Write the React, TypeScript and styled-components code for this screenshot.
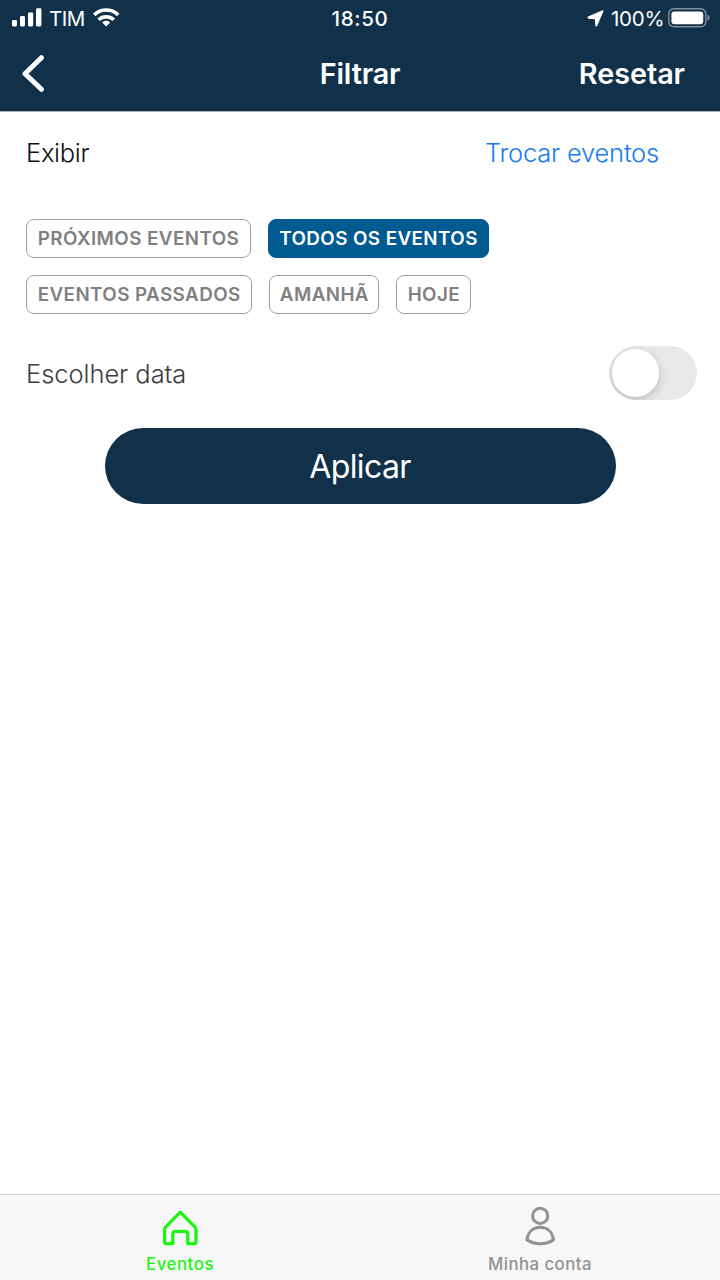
import React, { useState } from "react";
import styled, { createGlobalStyle } from "styled-components";

const GlobalStyle = createGlobalStyle`
  * { box-sizing: border-box; }
  body {
    margin: 0;
    background: #ffffff;
    font-family: Inter, "Liberation Sans", sans-serif;
  }
  button { font: inherit; border: 0; padding: 0; margin: 0; background: none; color: inherit; }
`;

const Screen = styled.div`
  display: flex;
  flex-direction: column;
  width: 720px;
  height: 1280px;
  overflow: hidden;
  background: #ffffff;
`;

const Header = styled.header`
  height: 111px;
  flex: none;
  background: #11314b;
  color: #ffffff;
  box-shadow: 0 1px 0 #a3b0ba;
`;

const StatusBar = styled.div`
  display: grid;
  grid-template-columns: 1fr auto 1fr;
  align-items: center;
  height: 36px;
  padding: 0 10px 0 12px;
  font-size: 20.5px;
  line-height: 35px;
`;

const StatusGroup = styled.div<{ $end?: boolean }>`
  display: flex;
  align-items: center;
  height: 36px;
  justify-content: ${(p) => (p.$end ? "flex-end" : "flex-start")};
`;

const StatusText = styled.span<{ $spacing: number; $left?: number; $right?: number }>`
  padding-top: 1px;
  letter-spacing: ${(p) => p.$spacing}px;
  margin-left: ${(p) => p.$left ?? 0}px;
  margin-right: ${(p) => p.$right ?? 0}px;
`;

const Clock = styled.span`
  padding: 1px 2px 0 0;
  font-weight: 500;
  letter-spacing: 0.7px;
`;

const NavBar = styled.div`
  display: grid;
  grid-template-columns: 1fr auto 1fr;
  align-items: center;
  height: 75px;
  padding: 0 35px 0 20px;
`;

const BackButton = styled.button`
  display: flex;
  justify-self: start;
`;

const NavTitle = styled.h1`
  margin: 0 0 0 15px;
  font-size: 28.8px;
  font-weight: 600;
  line-height: 36px;
  letter-spacing: -0.15px;
`;

const NavAction = styled.button`
  justify-self: end;
  font-size: 28.8px;
  font-weight: 600;
  line-height: 36px;
  letter-spacing: -0.05px;
`;

const Content = styled.main`
  flex: 1;
  display: flex;
  flex-direction: column;
`;

const SectionRow = styled.div`
  display: flex;
  align-items: center;
  justify-content: space-between;
  height: 84px;
  padding: 0 61px 0 26px;
`;

const Label = styled.span<{ $color: string; $weight: number; $spacing: number }>`
  font-size: 25.5px;
  line-height: 32px;
  font-weight: ${(p) => p.$weight};
  color: ${(p) => p.$color};
  letter-spacing: ${(p) => p.$spacing}px;
`;

const ChipList = styled.div`
  display: flex;
  flex-direction: column;
  gap: 17px;
  padding: 24px 26px 0;
`;

const ChipRow = styled.div`
  display: flex;
  gap: 17px;
`;

const Chip = styled.button<{ $active: boolean; $width: number }>`
  width: ${(p) => p.$width}px;
  height: 38.75px;
  padding-top: 1px;
  border-radius: 8px;
  border: 1.4px solid ${(p) => (p.$active ? "#015a90" : "#a0a0a0")};
  background: ${(p) => (p.$active ? "#015a90" : "#ffffff")};
  color: ${(p) => (p.$active ? "#ffffff" : "#808080")};
  font-size: 18.8px;
  font-weight: 600;
  line-height: 36px;
  letter-spacing: 0.43px;
  white-space: nowrap;
`;

const DateRow = styled.div`
  display: flex;
  align-items: center;
  justify-content: space-between;
  height: 54px;
  margin-top: 32.5px;
  padding: 0 23px 0 26px;

  ${Label} {
    padding-top: 2px;
  }
`;

const Toggle = styled.button<{ $on: boolean }>`
  display: flex;
  align-items: center;
  justify-content: ${(p) => (p.$on ? "flex-end" : "flex-start")};
  width: 88.5px;
  height: 54px;
  padding: 3px;
  border-radius: 27px;
  overflow: hidden;
  background: ${(p) => (p.$on ? "#34c759" : "#e8e8e8")};
`;

const Knob = styled.span`
  width: 47.5px;
  height: 47.5px;
  border-radius: 50%;
  background: #ffffff;
  box-shadow: 0 3px 9px rgba(0, 0, 0, 0.2);
`;

const ApplyButton = styled.button`
  align-self: center;
  width: 511px;
  height: 76px;
  margin-top: 28px;
  border-radius: 38px;
  background: #11314b;
  color: #ffffff;
  font-size: 32px;
  letter-spacing: -0.6px;
`;

const TabBar = styled.nav`
  display: flex;
  height: 86px;
  flex: none;
  border-top: 1.5px solid #d3d3d4;
  background: #f7f7f7;
`;

const Tab = styled.button<{ $color: string }>`
  flex: 1;
  display: flex;
  flex-direction: column;
  align-items: center;
  padding-top: 10px;
  color: ${(p) => p.$color};
`;

const TabLabel = styled.span<{ $spacing: number }>`
  margin-top: 4px;
  font-size: 16.8px;
  line-height: 22px;
  font-weight: 500;
  letter-spacing: ${(p) => p.$spacing}px;
`;

const SignalIcon = () => (
  <svg width="30" height="20" viewBox="0 0 30 20" fill="#fff">
    <rect x="0" y="11.9" width="5" height="6.5" rx="1.3" />
    <rect x="8" y="8.1" width="5" height="10.3" rx="1.3" />
    <rect x="16" y="4.5" width="5.2" height="13.9" rx="1.3" />
    <rect x="24" y="0.2" width="5.4" height="18.2" rx="1.3" />
  </svg>
);

const WifiIcon = () => (
  <svg width="28" height="20" viewBox="0 0 28 20">
    <path d="M1.2 6.8C8 .4 18.4 .4 25.2 6.8" fill="none" stroke="#fff" strokeWidth="3.7" />
    <path d="M5.6 11.7C9.8 7.7 16.6 7.7 20.8 11.7" fill="none" stroke="#fff" strokeWidth="3.6" />
    <path d="M9.2 14.4C11.4 12.3 15 12.3 17.2 14.4L13.2 18.5Z" fill="#fff" />
  </svg>
);

const LocationIcon = () => (
  <svg width="17" height="17" viewBox="0 0 17 17">
    <path
      d="M15.8 1L1.3 7.3L1.5 7.9L8.6 8.4L9 15.5L9.5 15.7Z"
      fill="#fff"
      stroke="#fff"
      strokeWidth="1.5"
      strokeLinejoin="round"
    />
  </svg>
);

const BatteryIcon = () => (
  <svg width="42" height="21" viewBox="0 0 42 21">
    <rect x="0.8" y="0.8" width="37" height="18" rx="5" fill="none" stroke="#7c8d9c" strokeWidth="1.4" />
    <rect x="3.4" y="3.4" width="31.8" height="12.8" rx="3" fill="#fff" />
    <path d="M39.4 6.6Q41.5 7.3 41.5 9.8T39.4 13Z" fill="#7c8d9c" />
  </svg>
);

const BackIcon = () => (
  <svg width="26" height="38" viewBox="0 0 26 38">
    <path d="M21.4 2.7L5 18.7L21.4 34.3" fill="none" stroke="#fff" strokeWidth="5" strokeLinecap="round" strokeLinejoin="round" />
  </svg>
);

const HomeIcon = () => (
  <svg width="40" height="44" viewBox="0 0 40 44">
    <path
      d="M20.3 7.2L5.8 21.8Q4.6 23.2 4.6 25V36.7Q4.6 38.7 6.6 38.7H12.8V29Q12.8 26.4 15.4 26.4H25.2Q27.8 26.4 27.8 29V38.7H34Q36 38.7 36 36.7V25Q36 23.2 34.8 21.8Z"
      fill="none"
      stroke="currentColor"
      strokeWidth="3.3"
      strokeLinejoin="round"
    />
  </svg>
);

const PersonIcon = () => (
  <svg width="40" height="44" viewBox="0 0 40 44">
    <g fill="none" stroke="currentColor" strokeWidth="3.1" strokeLinejoin="round">
      <circle cx="20.2" cy="10.9" r="7.6" />
      <path d="M6.9 34.8C8.1 26.8 13.4 22.3 20.2 22.3S32.3 26.8 33.5 34.8C29.8 37.5 25.4 38.8 20.2 38.8S10.6 37.5 6.9 34.8Z" />
    </g>
  </svg>
);

const chipRows = [
  [
    { label: "PRÓXIMOS EVENTOS", width: 225 },
    { label: "TODOS OS EVENTOS", width: 221 },
  ],
  [
    { label: "EVENTOS PASSADOS", width: 226.4 },
    { label: "AMANHÃ", width: 110 },
    { label: "HOJE", width: 75 },
  ],
];

export default function App() {
  const [selected, setSelected] = useState("TODOS OS EVENTOS");
  const [pickDate, setPickDate] = useState(false);

  return (
    <>
      <GlobalStyle />
      <Screen>
        <Header>
          <StatusBar>
            <StatusGroup>
              <SignalIcon />
              <StatusText $spacing={-0.5} $left={7} $right={8}>TIM</StatusText>
              <WifiIcon />
            </StatusGroup>
            <Clock>18:50</Clock>
            <StatusGroup $end>
              <LocationIcon />
              <StatusText $spacing={-0.2} $left={6.5} $right={3.5}>100%</StatusText>
              <BatteryIcon />
            </StatusGroup>
          </StatusBar>
          <NavBar>
            <BackButton aria-label="Voltar"><BackIcon /></BackButton>
            <NavTitle>Filtrar</NavTitle>
            <NavAction>Resetar</NavAction>
          </NavBar>
        </Header>
        <Content>
          <SectionRow>
            <Label $color="#111111" $weight={300} $spacing={-0.3}>Exibir</Label>
            <Label $color="#1a7cea" $weight={300} $spacing={-0.2}>Trocar eventos</Label>
          </SectionRow>
          <ChipList>
            {chipRows.map((row, i) => (
              <ChipRow key={i}>
                {row.map((chip) => (
                  <Chip
                    key={chip.label}
                    $width={chip.width}
                    $active={selected === chip.label}
                    onClick={() => setSelected(chip.label)}
                  >
                    {chip.label}
                  </Chip>
                ))}
              </ChipRow>
            ))}
          </ChipList>
          <DateRow>
            <Label $color="#3c3c3c" $weight={300} $spacing={-0.05}>Escolher data</Label>
            <Toggle $on={pickDate} aria-label="Escolher data" onClick={() => setPickDate(!pickDate)}>
              <Knob />
            </Toggle>
          </DateRow>
          <ApplyButton>Aplicar</ApplyButton>
        </Content>
        <TabBar>
          <Tab $color="#1ff414">
            <HomeIcon />
            <TabLabel $spacing={0.55}>Eventos</TabLabel>
          </Tab>
          <Tab $color="#929292">
            <PersonIcon />
            <TabLabel $spacing={0.45}>Minha conta</TabLabel>
          </Tab>
        </TabBar>
      </Screen>
    </>
  );
}
